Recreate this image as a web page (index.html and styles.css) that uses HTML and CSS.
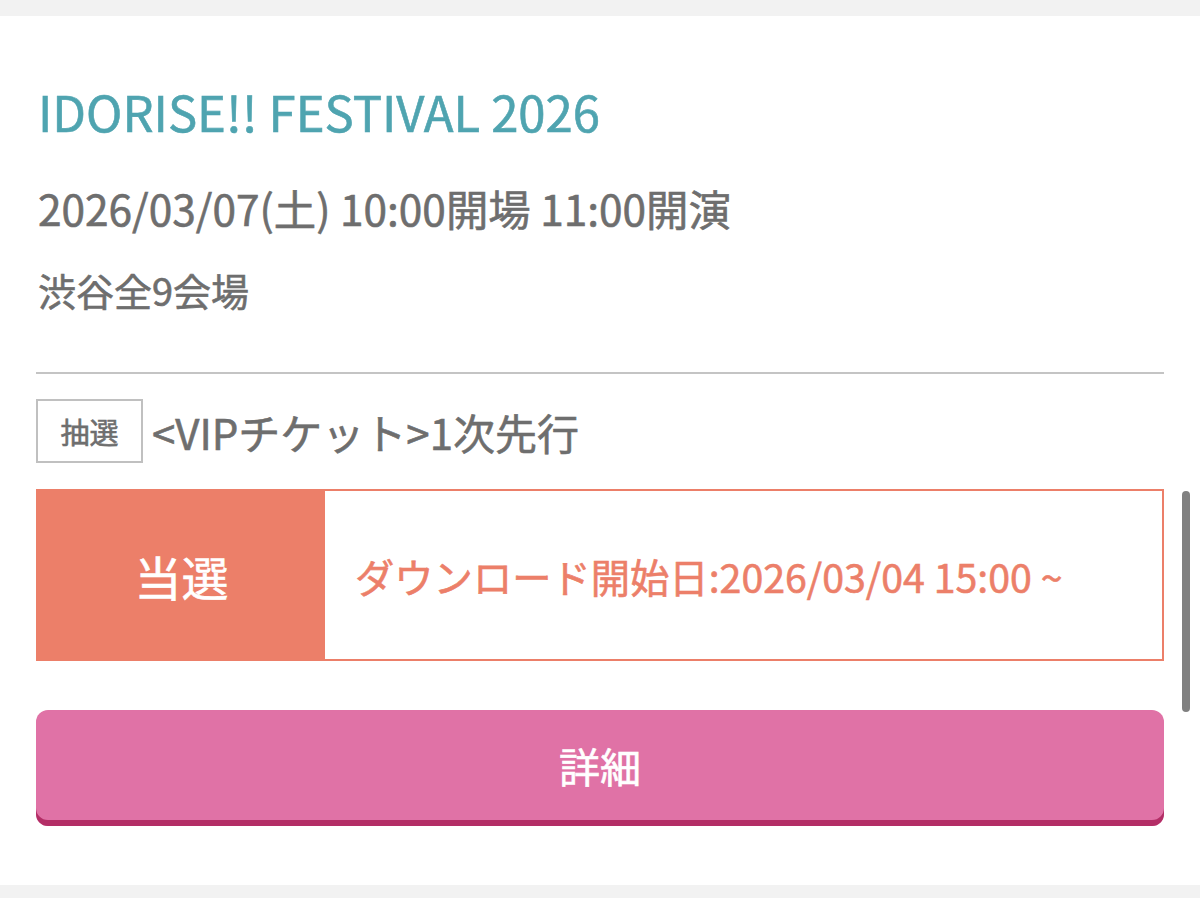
FILE: index.html
```html
<!DOCTYPE html>
<html lang="ja">
<head>
<meta charset="utf-8">
<link rel="stylesheet" href="styles.css">
</head>
<body>
<div class="page">
  <div class="card">
    <h1 class="title">IDORISE!! FESTIVAL 2026</h1>
    <p class="date">2026/03/07(土) 10:00開場 11:00開演</p>
    <p class="venue">渋谷全9会場</p>
    <hr class="divider">
    <div class="ticket-row">
      <span class="badge">抽選</span>
      <span class="ticket-name">&lt;VIPチケット&gt;1次先行</span>
    </div>
    <div class="status">
      <div class="status-label">当選</div>
      <div class="status-text">ダウンロード開始日:2026/03/04 15:00 ~</div>
    </div>
    <button class="detail-btn">詳細</button>
  </div>
  <div class="scrollbar"></div>
</div>
</body>
</html>
```
FILE: styles.css
```css
html, body {
  margin: 0;
  padding: 0;
  background: #f2f2f2;
  font-family: "Noto Sans CJK JP", "Noto Sans", sans-serif;
  font-weight: 400;
}
.page {
  position: relative;
  width: 1200px;
  height: 898px;
  padding-top: 16px;
  box-sizing: border-box;
}
.card {
  background: #ffffff;
  height: 869px;
  box-sizing: border-box;
  padding: 58px 36px 0 36px;
  display: flex;
  flex-direction: column;
  -webkit-text-stroke: 0.6px currentColor;
}
.title {
  margin: 0;
  font-size: 49px;
  line-height: 74px;
  font-weight: 400;
  color: #4fa4b0;
  padding-left: 2px;
}
.date {
  margin: 30px 0 0 0;
  font-size: 42.4px;
  line-height: 60px;
  color: #6e6e6e;
  padding-left: 2px;
}
.venue {
  margin: 25px 0 0 0;
  font-size: 38px;
  line-height: 54px;
  color: #6e6e6e;
  padding-left: 2px;
}
.divider {
  margin: 55px 0 0 0;
  border: none;
  height: 2px;
  background: #c4c4c4;
}
.ticket-row {
  margin-top: 25px;
  display: flex;
  align-items: center;
  gap: 9px;
}
.badge {
  box-sizing: border-box;
  width: 107px;
  height: 64px;
  border: 2px solid #c0c0c0;
  display: flex;
  align-items: center;
  justify-content: center;
  font-size: 29px;
  color: #6e6e6e;
}
.ticket-name {
  font-size: 42px;
  color: #6e6e6e;
}
.status {
  margin-top: 26px;
  display: flex;
  height: 172px;
  box-sizing: border-box;
  border: 2px solid #ec7f69;
}
.status-label {
  width: 287px;
  background: #ec7f69;
  color: #ffffff;
  font-size: 47px;
  display: flex;
  align-items: center;
  justify-content: center;
}
.status-text {
  flex: 1;
  display: flex;
  align-items: center;
  padding-left: 30px;
  font-size: 39.3px;
  color: #ec7f69;
}
.detail-btn {
  margin-top: 49px;
  height: 116px;
  border: none;
  border-radius: 12px;
  background: #e072a6;
  box-shadow: inset 0 -6px 0 #b32e66;
  color: #ffffff;
  font-family: inherit;
  font-weight: 400;
  font-size: 41px;
  padding: 0 0 6px 0;
  -webkit-text-stroke: 0.6px currentColor;
}
.scrollbar {
  position: absolute;
  left: 1182px;
  top: 491px;
  width: 8px;
  height: 221px;
  border-radius: 4px;
  background: #808080;
}
```
